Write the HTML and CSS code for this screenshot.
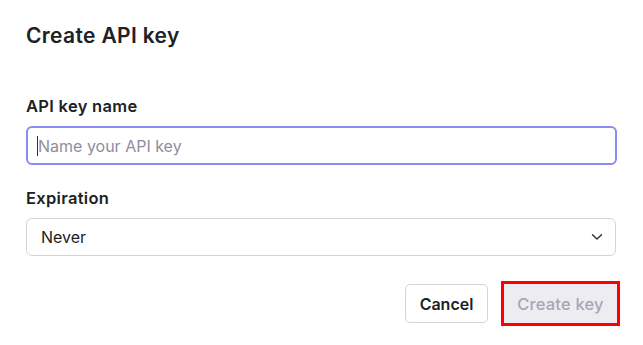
FILE: index.html
```html
<!DOCTYPE html>
<html lang="en">
<head>
<meta charset="utf-8">
<title>Create API key</title>
<link rel="stylesheet" href="styles.css">
</head>
<body>
<div class="dialog">
  <h1 class="title">Create API key</h1>
  <div class="field field-name">
    <label class="label" for="keyname">API key name</label>
    <div class="input focused"><span class="caret"></span><span class="placeholder">Name your API key</span></div>
  </div>
  <div class="field field-exp">
    <label class="label">Expiration</label>
    <div class="select">
      <span class="value">Never</span>
      <svg class="chev" width="12" height="8" viewBox="0 0 12 8"><path d="M1.5 1.8 L6 6 L10.5 1.8" fill="none" stroke="#2d2d33" stroke-width="1.4" stroke-linecap="round" stroke-linejoin="round"/></svg>
    </div>
  </div>
  <div class="actions">
    <button class="btn btn-cancel">Cancel</button>
    <button class="btn btn-create">Create key</button>
  </div>
</div>
</body>
</html>
```
FILE: styles.css
```css
* { box-sizing: border-box; }
html, body { margin: 0; padding: 0; background: #fff; }
body {
  width: 643px;
  height: 345px;
  overflow: hidden;
  font-family: Inter, "Noto Sans", "Liberation Sans", sans-serif;
  color: #202123;
}
.dialog {
  padding: 22px 26px 0 26px;
  width: 643px;
}
.title {
  margin: 0;
  font-size: 21px;
  line-height: 28px;
  font-weight: 600;
  letter-spacing: 0.35px;
}
.field { display: flex; flex-direction: column; gap: 8px; }
.field-name { margin-top: 44px; }
.field-exp { margin-top: 21px; }
.label {
  font-size: 16.5px;
  line-height: 24px;
  font-weight: 600;
  letter-spacing: 0.3px;
  color: #202123;
}
.input {
  width: 591px;
  height: 39px;
  border: 2px solid #8a8cf2;
  border-radius: 6px;
  display: flex;
  align-items: center;
  padding-left: 9px;
}
.caret {
  width: 1px;
  height: 20px;
  background: #333;
}
.placeholder {
  font-size: 16px;
  color: #8e8ea0;
}
.select {
  width: 590px;
  height: 38px;
  border: 1px solid #d3d3dc;
  border-radius: 6px;
  display: flex;
  align-items: center;
  justify-content: space-between;
  padding: 0 12px 0 14px;
}
.value { font-size: 16px; color: #202123; }
.chev { display: block; }
.actions {
  margin-top: 28px;
  display: flex;
  justify-content: flex-end;
  gap: 16px;
  width: 591px;
}
.btn {
  font-family: inherit;
  font-size: 16px;
  height: 39px;
  border-radius: 5px;
  padding: 0 10px;
}
.btn-cancel {
  width: 83px;
  background: #fff;
  border: 1px solid #d3d3dc;
  color: #202123;
  font-weight: 600;
}
.btn-create {
  width: 113px;
  background: #ececf1;
  border: none;
  border-radius: 0;
  color: #a6a6b8;
  font-weight: 500;
  font-size: 16.5px;
  letter-spacing: 0.2px;
  outline: 3px solid #ff0000;
  outline-offset: 0;
}
```
